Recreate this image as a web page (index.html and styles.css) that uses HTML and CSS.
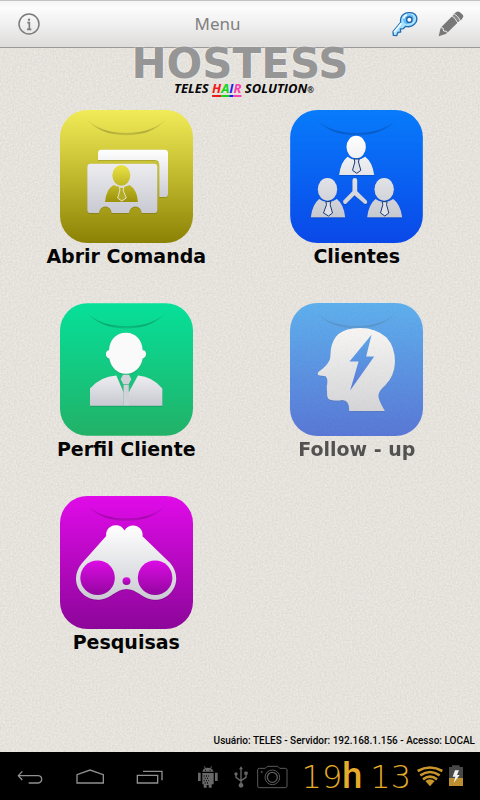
FILE: index.html
```html
<!DOCTYPE html>
<html lang="pt">
<head>
<meta charset="utf-8">
<meta name="viewport" content="width=device-width, initial-scale=1">
<title>Menu</title>
<link rel="stylesheet" href="styles.css">
</head>
<body>
<svg class="texture" aria-hidden="true">
  <filter id="grain" x="0" y="0" width="100%" height="100%" color-interpolation-filters="sRGB">
    <feTurbulence type="fractalNoise" baseFrequency="0.55" numOctaves="2" seed="4"/>
    <feColorMatrix values="0.1 0 0 0 0.85  0.1 0 0 0 0.838  0.1 0 0 0 0.816  0 0 0 0 1"/>
  </filter>
  <rect width="100%" height="100%" filter="url(#grain)"/>
</svg>

<header class="topbar">
  <button class="bar-button" aria-label="Informações">
    <svg width="24" height="24" viewBox="51 36 72 72" fill="none" stroke="#7c7c7c">
      <circle cx="87" cy="72" r="30" stroke-width="4.5"/>
      <path d="M82 68h6v19M81 88h13" stroke-width="5"/>
      <circle cx="87" cy="59" r="3.5" fill="#7c7c7c" stroke="none"/>
    </svg>
  </button>
  <h1 class="title">Menu</h1>
  <div class="actions">
    <button class="bar-button" aria-label="Senha">
      <svg width="26" height="26" viewBox="214 34 78 78">
        <g transform="translate(-2 0)">
          <path d="M242 68l-23 28 1 11 10 1 4-10 8-1-1-9 9-1 7-7q15 4 26-6 11-10 6-24-6-13-24-11-17 2-22 15-2 7-1 14z" fill="#a9e2ff" stroke="#246db0" stroke-width="4" stroke-linejoin="round"/>
          <path d="M249 55q5-11 20-11 13 2 12 14-3 14-21 16-12-4-11-19z" fill="#61bdfb"/>
          <path d="M244 71l-22 27M251 57q1-9 10-12" fill="none" stroke="#f0fcff" stroke-width="5"/>
          <circle cx="268" cy="60" r="8" fill="#f5fbff" stroke="#235f9f" stroke-width="4"/>
        </g>
      </svg>
    </button>
    <button class="bar-button" aria-label="Editar">
      <svg width="26" height="26" viewBox="594 33 78 78">
        <path d="M596 109l6-26 38-38 18 18-39 38z" fill="#777"/>
        <path d="M644 40q8-9 15-4l9 8q5 6-4 15l-5 4-19-18z" fill="#777"/>
        <path d="M601 83l8 1 2 9 9 1 2 7M635 47q11 6 19 23M642 41q12 7 20 22" fill="none" stroke="#eee" stroke-width="3"/>
      </svg>
    </button>
  </div>
</header>

<main class="content">
  <div class="brand">
    <p class="wordmark">HOSTESS</p>
    <p class="tagline">TELES <span class="r">H</span><span class="g">A</span><span class="b">I</span><span class="p">R</span> SOLUTION<span class="dot">®</span></p>
  </div>

  <nav class="tiles" aria-label="Menu">
    <a class="tile" href="#comanda">
      <svg class="icon" viewBox="60 30 399 399">
        <defs>
          <linearGradient id="yellow" gradientUnits="userSpaceOnUse" x1="0" y1="30" x2="0" y2="429"><stop offset="0" stop-color="#f1eb58"/><stop offset=".5" stop-color="#c1b92d"/><stop offset="1" stop-color="#8b8205"/></linearGradient>
          <linearGradient id="yellowMan" gradientUnits="userSpaceOnUse" x1="0" y1="195" x2="0" y2="306"><stop offset="0" stop-color="#eae345"/><stop offset="1" stop-color="#9c920b"/></linearGradient>
          <linearGradient id="silver" x1="0" y1="0" x2="0" y2="1"><stop offset="0" stop-color="#fff"/><stop offset="1" stop-color="#cbccd3"/></linearGradient>
          <linearGradient id="silverFlat" x1="0" y1="0" x2="0" y2="1"><stop offset="0" stop-color="#ededf1"/><stop offset="1" stop-color="#c8c9d1"/></linearGradient>
          <linearGradient id="flapShade" x1="0" y1="0" x2="0" y2="1"><stop offset="0" stop-color="#000" stop-opacity=".04"/><stop offset=".8" stop-color="#000" stop-opacity=".22"/><stop offset="1" stop-color="#000" stop-opacity=".1"/></linearGradient>
          <filter id="soft" x="-10%" y="-10%" width="120%" height="120%"><feDropShadow dx="0" dy="1" stdDeviation="2" flood-opacity=".45"/></filter>
        </defs>
        <rect x="60" y="30" width="399" height="399" rx="82" fill="url(#yellow)"/>
        <path d="M136 54Q180 99 259 99T382 54Q338 106 259 106T136 54z" fill="url(#flapShade)"/>
        <g filter="url(#soft)">
          <path d="M184 149h190q10 0 10 10v122q0 10-10 10h-16v-96q0-15-14-15H174v-21q0-10 10-10z" fill="url(#silver)"/>
          <path d="M142 191h200q10 0 10 10v128q0 10-10 10h-37c-2-26-35-26-38 0h-52c-2-26-35-26-38 0h-25q-10 0-10-10V201q0-10 10-10z" fill="url(#silverFlat)"/>
        </g>
        <ellipse cx="244" cy="226" rx="27" ry="31" fill="url(#yellowMan)"/>
        <path d="M195 306q3-38 26-51 23 13 48 0 22 14 25 51z" fill="url(#yellowMan)"/>
        <path d="M238 262h14l-3 8 10 24-14 9-12-9 7-24z" fill="#b5ab22" stroke="#e3e3dc" stroke-width="3"/>
      </svg>
      <span class="label">Abrir Comanda</span>
    </a>

    <a class="tile" href="#clientes">
      <svg class="icon" viewBox="45 30 398 399">
        <defs>
          <linearGradient id="blue" x1="0" y1="0" x2="0" y2="1"><stop offset="0" stop-color="#087bfb"/><stop offset="1" stop-color="#0a48e8"/></linearGradient>
          <linearGradient id="people" gradientUnits="userSpaceOnUse" x1="0" y1="108" x2="0" y2="353"><stop offset="0" stop-color="#fff"/><stop offset="1" stop-color="#c6c8d0"/></linearGradient>
        </defs>
        <rect x="45" y="30" width="398" height="399" rx="82" fill="url(#blue)"/>
        <path d="M121 56Q165 99 244 99T367 56Q323 106 244 106T121 56z" fill="url(#flapShade)"/>
        <g fill="url(#people)" filter="url(#soft)">
          <ellipse cx="243" cy="141" rx="29" ry="34"/>
          <path d="M192 225q4-38 25-55 26 20 53 0 22 16 27 55z"/>
          <ellipse cx="157" cy="268" rx="29" ry="34"/>
          <path d="M107 352q4-38 25-55 26 20 53 0 21 16 25 55z"/>
          <ellipse cx="327" cy="268" rx="29" ry="34"/>
          <path d="M276 352q4-38 25-55 26 20 53 0 22 16 27 55z"/>
          <path d="M232 240q0-6 7-6t7 6v34l29 28q4 9-6 10l-31-26-26 26q-9 0-8-10l28-28z"/>
        </g>
        <g fill="#dfe1e6" stroke="#173b7a" stroke-width="3">
          <path d="M237 177h15l-2 9 7 25-12 9-13-9 7-25z"/>
          <path d="M152 305h15l-2 9 7 25-12 9-15-9 9-25z"/>
          <path d="M321 305h15l-2 9 7 25-12 9-13-9 7-25z"/>
        </g>
      </svg>
      <span class="label">Clientes</span>
    </a>

    <a class="tile" href="#perfil">
      <svg class="icon" viewBox="60 22 399 398">
        <defs>
          <linearGradient id="green" x1="0" y1="0" x2="0" y2="1"><stop offset="0" stop-color="#06e09a"/><stop offset="1" stop-color="#22b167"/></linearGradient>
        </defs>
        <rect x="60" y="22" width="399" height="398" rx="82" fill="url(#green)"/>
        <path d="M136 46Q180 91 259 91T382 46Q338 98 259 98T136 46z" fill="url(#flapShade)"/>
        <g filter="url(#soft)">
          <path d="M258 111c31 0 49 24 50 52 13-1 14 21 0 25-5 27-24 46-50 46s-45-19-50-46c-14-3-13-25-1-25 2-29 20-52 51-52z" fill="#fafafa"/>
          <path d="M150 330v-52q31-36 79-39l21 49v42zM367 330v-52q-30-36-73-39l-27 49v42z" fill="url(#silverFlat)"/>
          <path d="M249 237h18l7 13-8 15h-16l-8-15zM250 267h17v63h-17z" fill="#d0d2d8"/>
        </g>
        <path d="M250 266v22M267 266v22M250 266h17" stroke="#62b692" stroke-width="2"/>
      </svg>
      <span class="label">Perfil Cliente</span>
    </a>

    <a class="tile muted" href="#follow-up">
      <svg class="icon" viewBox="45 22 398 398">
        <defs>
          <linearGradient id="sky" gradientUnits="userSpaceOnUse" x1="0" y1="22" x2="0" y2="420"><stop offset="0" stop-color="#1794f4"/><stop offset="1" stop-color="#0e3fd1"/></linearGradient>
          <linearGradient id="bolt" x1="0" y1="0" x2="0" y2="1"><stop offset="0" stop-color="#1286ed"/><stop offset="1" stop-color="#1045d5"/></linearGradient>
        </defs>
        <rect x="45" y="22" width="398" height="398" rx="82" fill="url(#sky)"/>
        <path d="M121 48Q165 91 244 91T367 48Q323 98 244 98T121 48z" fill="url(#flapShade)"/>
        <path d="M222 345q1-34-21-33-22 4-38-1-8-5-7-22l-1-17q5-22-3-31l-21-3q-6-4 0-10 36-27 35-48 0-74 67-82 62-8 101 27 26 29 25 76-2 41-29 67-23 19-20 37 3 14 19 40z" fill="url(#silver)" filter="url(#soft)"/>
        <path d="M289 117l-66 80h27l-25 87 72-102h-24z" fill="url(#bolt)"/>
      </svg>
      <span class="label">Follow - up</span>
    </a>

    <a class="tile" href="#pesquisas">
      <svg class="icon" viewBox="59 19 400 400">
        <defs>
          <linearGradient id="magenta" x1="0" y1="0" x2="0" y2="1"><stop offset="0" stop-color="#e00be9"/><stop offset="1" stop-color="#8c0699"/></linearGradient>
          <linearGradient id="lens" x1="0" y1="0" x2="0" y2="1"><stop offset="0" stop-color="#dc0ce5"/><stop offset="1" stop-color="#93069f"/></linearGradient>
        </defs>
        <rect x="59" y="19" width="400" height="400" rx="82" fill="url(#magenta)"/>
        <path d="M136 43Q180 87 259 87T382 43Q338 94 259 94T136 43z" fill="url(#flapShade)"/>
        <path d="M198 139c-4-34 42-44 55-16 15-28 59-16 54 17l84 81c41 50 4 112-50 110-35-2-50-32-82-32s-46 30-82 32c-58 2-93-60-52-110z" fill="url(#silver)" filter="url(#soft)"/>
        <g fill="url(#lens)"><circle cx="172" cy="265" r="52"/><circle cx="345" cy="265" r="52"/><circle cx="259" cy="275" r="12"/></g>
      </svg>
      <span class="label">Pesquisas</span>
    </a>
  </nav>

  <p class="status">Usuário: TELES - Servidor: 192.168.1.156 - Acesso: LOCAL</p>
</main>

<footer class="system">
  <div class="nav-keys">
    <button class="key" aria-label="Voltar">
      <svg width="28" height="48" viewBox="48 81 84 144" fill="none" stroke="#909090" stroke-width="4"><path d="M67 139l-12 13 12 13M56 152h59q10 1 10 11t-11 11H86"/></svg>
    </button>
    <button class="key" aria-label="Início">
      <svg width="28" height="48" viewBox="228 81 84 144" fill="none" stroke="#909090" stroke-width="4"><path d="M231 174v-25l39-14 40 14v25z"/></svg>
    </button>
    <button class="key" aria-label="Aplicativos recentes">
      <svg width="28" height="48" viewBox="411 81 84 144" fill="none" stroke="#909090" stroke-width="4"><path d="M415 151h61v23h-61zM432 139h57v27"/></svg>
    </button>
  </div>
  <div class="tray">
    <svg width="20" height="48" viewBox="585 81 60 144" fill="#686868">
      <path d="M598 140q2-12 16-12t18 12zM585 143h8v25h-8zM636 143h8v25h-8zM598 144h34v34h-6v10h-9v-8h-6v8h-9v-10h-4z"/>
      <path d="M604 124l4 7M626 124l-4 7" stroke="#686868" stroke-width="3"/>
      <path d="M602 153h16M605 160h14M602 167h16M605 174h12" stroke="#111" stroke-width="4" stroke-dasharray="3 4"/>
      <path d="M606 136h3M620 136h3" stroke="#000" stroke-width="3"/>
    </svg>
    <svg width="14" height="48" viewBox="692 81 42 144" fill="none" stroke="#686868" stroke-width="4">
      <path d="M713 132v46M698 149v8l15 11M728 147v10l-15 10"/>
      <path d="M713 124l6 9h-12z" fill="#686868" stroke="none"/>
      <circle cx="713" cy="181" r="7" fill="#686868" stroke="none"/>
      <circle cx="698" cy="147" r="5" fill="#686868" stroke="none"/><path d="M723 140h10v9h-10z" fill="#686868" stroke="none"/>
    </svg>
    <svg width="31" height="48" viewBox="41 81 93 144" fill="none" stroke="#5b5b5b" stroke-width="3">
      <path d="M48 130h18l6-6h31l6 6h17q5 0 5 5v48q0 5-5 5H48q-5 0-5-5v-48q0-5 5-5z"/>
      <circle cx="87" cy="157" r="22"/><circle cx="87" cy="157" r="15" stroke-width="4"/><circle cx="55" cy="141" r="2"/>
    </svg>
    <time class="clock" datetime="19:13"><span>19<b>h</b></span><span>13</span></time>
    <svg width="26" height="48" viewBox="531 81 78 144" fill="none" stroke="#c9962c" stroke-width="8">
      <path d="M533 138q37-21 74 0M541 151q29-20 58 0M549 163q21-16 42 0"/>
      <path d="M556 168q14-10 28 0l-14 16z" fill="#c9962c" stroke="none"/>
    </svg>
    <svg width="14" height="48" viewBox="627 81 42 144">
      <path d="M627 126h9v-5h23v5h10v57h-42z" fill="#484848"/><path d="M627 159h42v24h-42z" fill="#bd8f2e"/>
      <path d="M645 136h12l-6 14h8l-18 24 5-19h-8z" fill="#f1f1f1"/>
    </svg>
  </div>
</footer>
</body>
</html>
```

FILE: styles.css
```css
* { box-sizing: border-box; }

body {
  margin: 0;
  min-height: 100vh;
  display: flex;
  flex-direction: column;
  background: #e5e2dc;
  color: #050505;
  font-family: Roboto, "Liberation Sans", sans-serif;
}

h1, p { margin: 0; }

button {
  display: flex;
  padding: 0;
  border: 0;
  background: none;
}

svg { display: block; flex: none; }

.texture {
  position: absolute;
  inset: 0;
  width: 100%;
  height: 100%;
  z-index: -1;
}

.topbar {
  display: grid;
  grid-template-columns: 1fr auto 1fr;
  align-items: center;
  height: 48px;
  padding: 0 16px 0 17px;
  border-top: 1px solid #c4c3c3;
  border-bottom: 1px solid #999;
  background: linear-gradient(#f5f5f5, #fcfcfc 15%, #f1f0f0 50%, #dddcdb);
}

.title {
  padding-right: 46px;
  color: #808080;
  font: 400 17px/24px "Noto Sans", sans-serif;
}

.actions {
  display: flex;
  justify-content: flex-end;
  gap: 20px;
}

.content {
  flex: 1;
  display: flex;
  flex-direction: column;
}

.brand {
  display: flex;
  flex-direction: column;
  align-items: center;
  height: 62px;
}

.wordmark {
  color: #969696;
  font: 700 42px/32px "DejaVu Sans", sans-serif;
  text-shadow: 0 0 2px #fff;
}

.tagline {
  padding-left: 8px;
  font: italic 700 13px/16px "Open Sans", sans-serif;
}

.tagline span {
  text-decoration: underline 2px;
  text-underline-offset: 2px;
  text-decoration-skip-ink: none;
}
.r { color: #f01818; }
.g { color: #13d51b; }
.b { color: #1c1cf0; }
.p { color: #fb41ae; }
.tagline .dot { font-size: 8px; text-decoration: none; }

.tiles {
  display: grid;
  grid-template-columns: 1fr 1fr;
  row-gap: 34px;
  padding: 0 8px 0 11px;
}

.tile {
  display: flex;
  flex-direction: column;
  align-items: center;
  color: inherit;
  text-decoration: none;
}

.icon { width: 133px; height: 133px; }

.label { font: 700 19px/26px "DejaVu Sans", sans-serif; }

.muted { opacity: 0.65; }

.status {
  margin-top: auto;
  padding: 0 5px;
  text-align: right;
  font-size: 10px;
  font-weight: 500;
  line-height: 23px;
}

.system {
  display: flex;
  align-items: center;
  justify-content: space-between;
  height: 48px;
  padding: 0 17px 0 16px;
  background: #000;
}

.nav-keys { display: flex; gap: 32px; }

.tray {
  display: flex;
  align-items: center;
  gap: 6px;
}

.tray svg:first-child { margin-right: 10px; }
.tray svg:nth-child(2) { margin-right: 3px; }

.clock {
  display: flex;
  align-items: baseline;
  gap: 8px;
  padding-left: 8px;
  color: #e6ab2b;
  font: 200 32px/44px "DejaVu Sans", sans-serif;
}

.clock b { font: 500 36px/44px Roboto, sans-serif; }
```
